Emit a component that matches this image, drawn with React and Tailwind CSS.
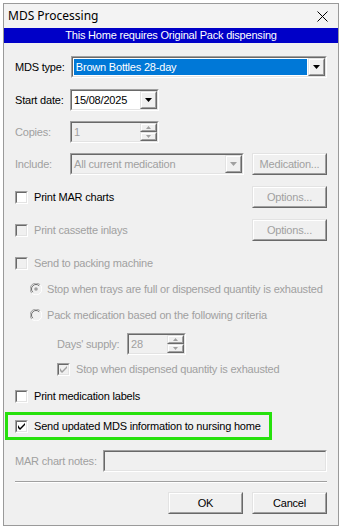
import React from 'react';

const font = { fontFamily: '"Liberation Sans", Arial, sans-serif' };

// classic 3D frames
const Sunken = ({ className = '', children }) => (
  <div className={`border border-t-[#a0a0a0] border-l-[#a0a0a0] border-b-white border-r-white ${className}`}>
    <div className="w-full h-full border border-t-[#696969] border-l-[#696969] border-b-[#e3e3e3] border-r-[#e3e3e3] flex items-center">
      {children}
    </div>
  </div>
);

const Raised = ({ className = '', children }) => (
  <div className={`border border-t-[#e3e3e3] border-l-[#e3e3e3] border-b-[#696969] border-r-[#696969] bg-[#f0f0f0] ${className}`}>
    <div className="w-full h-full border border-t-white border-l-white border-b-[#a0a0a0] border-r-[#a0a0a0] flex items-center justify-center">
      {children}
    </div>
  </div>
);

const Arrow = ({ disabled }) => (
  <svg width="7" height="4" viewBox="0 0 7 4">
    <path d="M0 0h7L3.5 4z" fill={disabled ? '#a0a0a0' : '#000'} />
  </svg>
);

const SpinButtons = () => (
  <div className="flex flex-col w-[17px] h-full">
    <Raised className="flex-1">
      <svg width="5" height="3" viewBox="0 0 5 3"><path d="M2.5 0L5 3H0z" fill="#a0a0a0" /></svg>
    </Raised>
    <Raised className="flex-1">
      <svg width="5" height="3" viewBox="0 0 5 3"><path d="M0 0h5L2.5 3z" fill="#a0a0a0" /></svg>
    </Raised>
  </div>
);

const Checkbox = ({ checked, disabled }) => (
  <div className="w-[13px] h-[13px] border border-t-[#a0a0a0] border-l-[#a0a0a0] border-b-white border-r-white shrink-0">
    <div className={`w-full h-full border border-t-[#696969] border-l-[#696969] border-b-[#e3e3e3] border-r-[#e3e3e3] flex items-center justify-center ${disabled ? 'bg-[#f0f0f0]' : 'bg-white'}`}>
      {checked && (
        <svg width="7" height="7" viewBox="0 0 7 7">
          <path d="M0 2v3l2 2 5-5V0L2 5z" fill={disabled ? '#a0a0a0' : '#000'} />
        </svg>
      )}
    </div>
  </div>
);

const Radio = ({ checked }) => (
  <svg width="12" height="12" viewBox="0 0 12 12" className="shrink-0">
    <circle cx="6" cy="6" r="5.5" fill="#f0f0f0" />
    <path d="M10.2 1.8A5.5 5.5 0 0 0 1.8 10.2" stroke="#a0a0a0" fill="none" />
    <path d="M9.2 2.8A4.3 4.3 0 0 0 2.8 9.2" stroke="#696969" fill="none" />
    <path d="M1.8 10.2A5.5 5.5 0 0 0 10.2 1.8" stroke="#fff" fill="none" />
    {checked && <circle cx="6" cy="6" r="1.8" fill="#a0a0a0" />}
  </svg>
);

const Button = ({ children, disabled, className = '' }) => (
  <Raised className={`w-[75px] h-[22px] ${className}`}>
    <span className={disabled ? 'text-[#a0a0a0]' : 'text-black'}>{children}</span>
  </Raised>
);

export default function App() {
  return (
    <div className="w-[341px] h-[528px] bg-white overflow-hidden pt-[3px] pl-[3px] text-[11px] tracking-[-0.2px] leading-none whitespace-nowrap" style={font}>
      <div className="w-[336px] h-[523px] border border-[#9a9a9a] bg-[#f0f0f0] flex flex-col">
        {/* title bar */}
        <div className="h-[24px] flex items-center justify-between pl-[4px] pr-[10px] bg-[#f3f3f3]">
          <span className="text-[12px] tracking-normal text-black" style={{ fontFamily: '"Noto Sans", "Open Sans", sans-serif' }}>MDS Processing</span>
          <svg width="11" height="11" viewBox="0 0 11 11">
            <path d="M0.5 0.5l10 10M10.5 0.5l-10 10" stroke="#000" strokeWidth="1" />
          </svg>
        </div>
        {/* banner */}
        <div className="h-[15px] bg-[#0000c8] text-white flex items-center justify-center">
          This Home requires Original Pack dispensing
        </div>

        <div className="flex flex-col px-[11px]">
          {/* MDS type */}
          <div className="mt-[13px] h-[22px] flex items-center">
            <span className="w-[56px] text-black">MDS type:</span>
            <Sunken className="w-[257px] h-[22px] bg-white">
              <div className="flex-1 h-full p-[1px]">
                <div className="h-full bg-[#0078d7] text-white flex items-center pl-[2px]">Brown Bottles 28-day</div>
              </div>
              <Raised className="w-[17px] h-full"><Arrow /></Raised>
            </Sunken>
          </div>
          {/* Start date */}
          <div className="mt-[11px] h-[22px] flex items-center">
            <span className="w-[55px] text-black">Start date:</span>
            <Sunken className="w-[89px] h-[22px] bg-white">
              <div className="flex-1 pl-[2px] text-black">15/08/2025</div>
              <Raised className="w-[17px] h-full"><Arrow /></Raised>
            </Sunken>
          </div>
          {/* Copies */}
          <div className="mt-[10px] h-[22px] flex items-center">
            <span className="w-[55px] text-[#a0a0a0]">Copies:</span>
            <Sunken className="w-[89px] h-[22px] bg-[#f0f0f0]">
              <div className="flex-1 pl-[2px] text-[#a0a0a0]">1</div>
              <SpinButtons />
            </Sunken>
          </div>
          {/* Include */}
          <div className="mt-[10px] h-[22px] flex items-center">
            <span className="w-[55px] text-[#a0a0a0]">Include:</span>
            <Sunken className="w-[174px] h-[22px] bg-[#f0f0f0]">
              <div className="flex-1 pl-[2px] text-[#a0a0a0]">All current medication</div>
              <Raised className="w-[17px] h-full"><Arrow disabled /></Raised>
            </Sunken>
            <Button disabled className="ml-auto">Medication...</Button>
          </div>
          {/* Print MAR charts */}
          <div className="mt-[11px] h-[22px] flex items-center gap-[6px]">
            <Checkbox />
            <span className="text-black">Print MAR charts</span>
            <Button disabled className="ml-auto">Options...</Button>
          </div>
          {/* Print cassette inlays */}
          <div className="mt-[11px] h-[22px] flex items-center gap-[6px]">
            <Checkbox disabled />
            <span className="text-[#a0a0a0]">Print cassette inlays</span>
            <Button disabled className="ml-auto">Options...</Button>
          </div>
          {/* Send to packing machine */}
          <div className="mt-[11px] h-[22px] flex items-center gap-[6px]">
            <Checkbox disabled />
            <span className="text-[#a0a0a0]">Send to packing machine</span>
          </div>
          <div className="mt-[4px] h-[22px] flex items-center gap-[5px] pl-[15px]">
            <Radio checked />
            <span className="text-[#a0a0a0]">Stop when trays are full or dispensed quantity is exhausted</span>
          </div>
          <div className="mt-[4px] h-[22px] flex items-center gap-[5px] pl-[15px]">
            <Radio />
            <span className="text-[#a0a0a0]">Pack medication based on the following criteria</span>
          </div>
          {/* Days' supply */}
          <div className="mt-[7px] h-[22px] flex items-center pl-[42px]">
            <span className="w-[70px] text-[#a0a0a0]">Days' supply:</span>
            <Sunken className="w-[59px] h-[22px] bg-[#f0f0f0]">
              <div className="flex-1 pl-[2px] text-[#a0a0a0]">28</div>
              <SpinButtons />
            </Sunken>
          </div>
          <div className="mt-[3px] h-[22px] flex items-center gap-[6px] pl-[42px]">
            <Checkbox checked disabled />
            <span className="text-[#a0a0a0]">Stop when dispensed quantity is exhausted</span>
          </div>
          {/* Print medication labels */}
          <div className="mt-[5px] h-[22px] flex items-center gap-[6px]">
            <Checkbox />
            <span className="text-black">Print medication labels</span>
          </div>
        </div>

        {/* highlighted row */}
        <div className="mt-[5px] ml-[1px] w-[267px] h-[28px] border-[3px] border-[#26e10c] flex items-center gap-[6px] pl-[7px]">
          <Checkbox checked />
          <span className="text-black">Send updated MDS information to nursing home</span>
        </div>

        <div className="flex flex-col px-[11px]">
          {/* MAR chart notes */}
          <div className="mt-[10px] h-[22px] flex items-center">
            <span className="w-[88px] text-[#a0a0a0]">MAR chart notes:</span>
            <Sunken className="flex-1 h-[22px] bg-[#f0f0f0]" />
          </div>
          <div className="mt-[9px] h-[2px] border-t border-t-[#a0a0a0] border-b border-b-white" />
          <div className="mt-[9px] h-[22px] flex justify-end gap-[9px]">
            <Button>OK</Button>
            <Button>Cancel</Button>
          </div>
        </div>
      </div>
    </div>
  );
}
